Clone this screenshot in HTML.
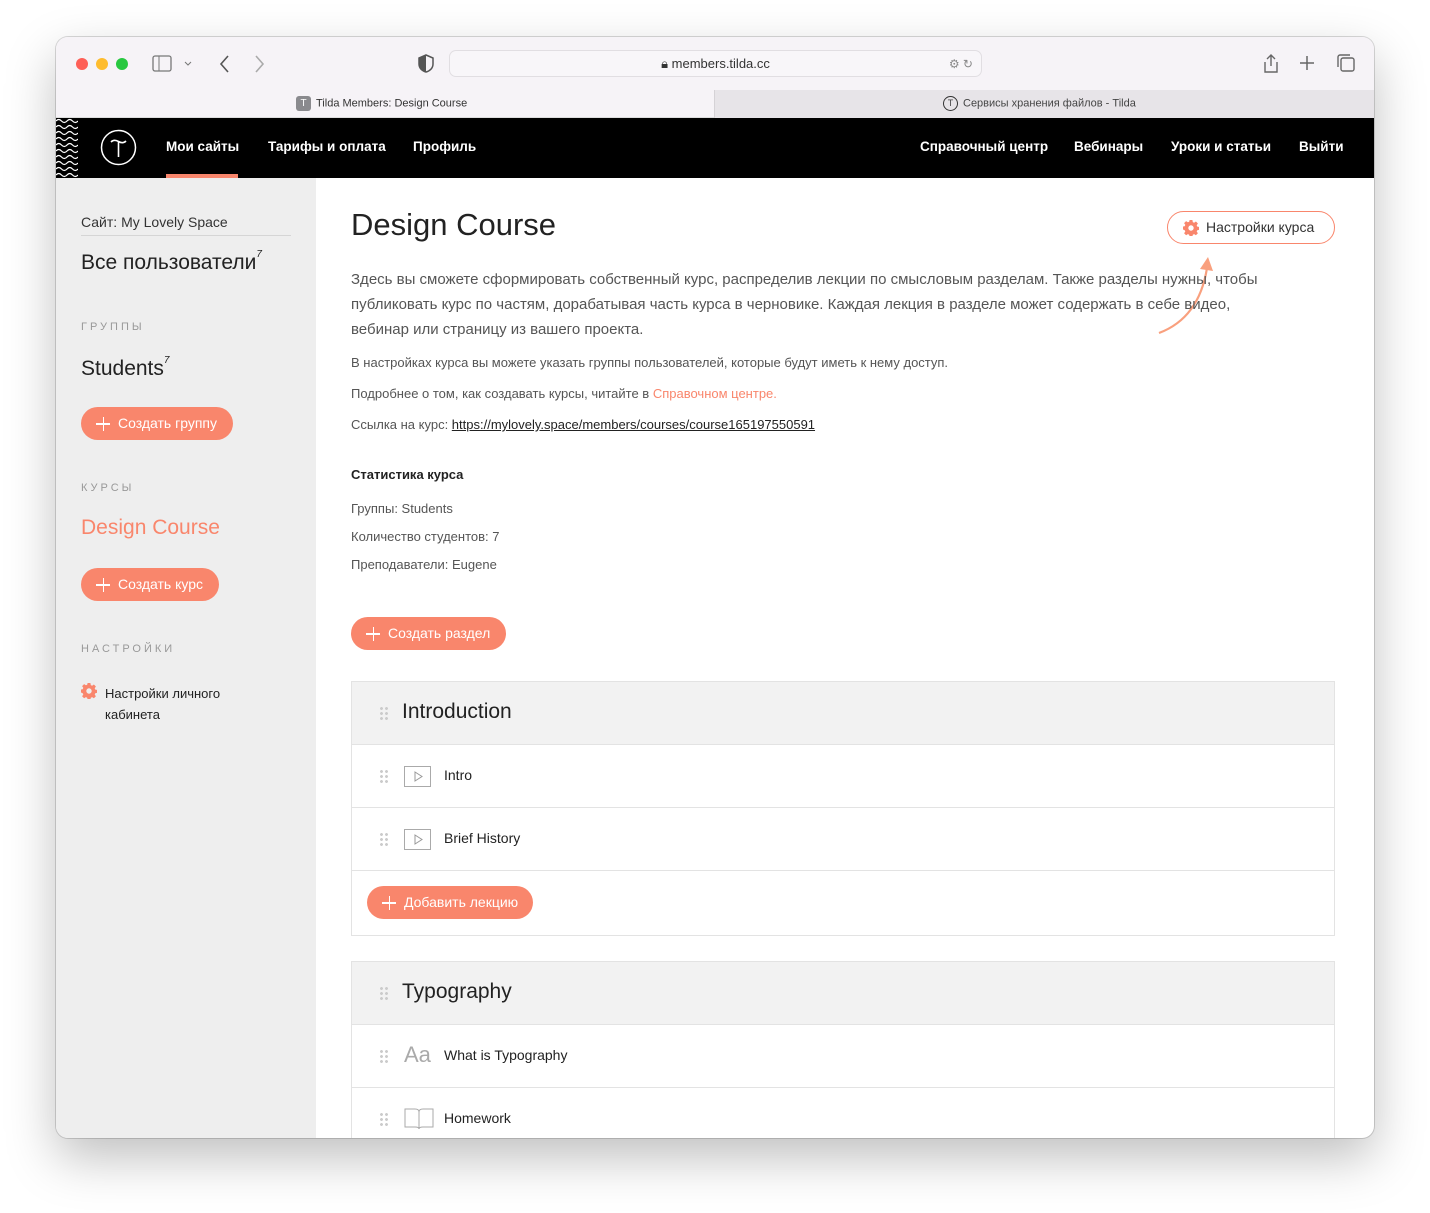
<!DOCTYPE html>
<html><head><meta charset="utf-8"><style>
*{margin:0;padding:0;box-sizing:border-box}
body{width:1430px;height:1213px;background:#fff;font-family:"Liberation Sans",sans-serif;position:relative;overflow:hidden;color:#333}
.win{position:absolute;left:56px;top:37px;width:1318px;height:1101px;border-radius:12px;overflow:hidden;box-shadow:0 20px 50px rgba(0,0,0,.25),0 0 0 1px rgba(0,0,0,.15);background:#fff}
.abs{position:absolute}
.toolbar{left:0;top:0;width:1318px;height:53px;background:#f6f3f7}
.tabs{left:0;top:53px;width:1318px;height:28px;background:#f6f3f7;border-bottom:1px solid #ddd}
.tab2{left:658px;top:53px;width:660px;height:28px;background:#e7e4e8;border-left:1px solid #d5d2d6}
.dot{width:12px;height:12px;border-radius:50%;top:21px}
.url{left:393px;top:13px;width:533px;height:27px;border:1px solid #e1dee2;border-radius:7px;background:#f8f6f9;font-size:13px;color:#333;text-align:center;line-height:26px}
.hdr{left:0;top:81px;width:1318px;height:60px;background:#000;color:#fff;font-size:13.5px;font-weight:bold}
.hdr span{position:absolute;top:21px}
.side{left:0;top:141px;width:260px;height:960px;background:#eeeeee}
.btn{position:absolute;background:#f9866c;color:#fff;border-radius:17px;height:33px;font-size:14px;line-height:33px;padding-left:37px}
.btn:before{content:"";position:absolute;left:15px;top:16px;width:14px;height:1.5px;background:#fff}
.btn:after{content:"";position:absolute;left:21.5px;top:9.5px;width:1.5px;height:14px;background:#fff}
.cap{font-size:11px;letter-spacing:3px;color:#999}
.main{font-size:13px;color:#555}
.sec{left:295px;width:984px;border:1px solid #e3e3e3}
.sh{background:#f2f2f2;height:63px;border-bottom:1px solid #e3e3e3;position:relative}
.row{height:63px;border-bottom:1px solid #e3e3e3;position:relative;background:#fff}
.grip{position:absolute;left:27px;width:10px;height:14px;background:radial-gradient(circle,#ccc 1.3px,transparent 1.6px) 0 0/5px 5px}
.t1{position:absolute;left:50px;font-size:21px;color:#222;top:18px}
.t2{position:absolute;left:92px;font-size:14px;color:#222;top:22px}
</style></head><body>
<svg width="0" height="0" style="position:absolute"><defs><g id="gear"><path fill="#f9866c" fill-rule="evenodd" d="M6.6 0h2.8l.4 2.1 1.3.6 1.8-1.2 2 2-1.2 1.8.6 1.3 2.1.4v2.8l-2.1.4-.6 1.3 1.2 1.8-2 2-1.8-1.2-1.3.6-.4 2.1H6.6l-.4-2.1-1.3-.6-1.8 1.2-2-2 1.2-1.8-.6-1.3L-.4 9.4V6.6l2.1-.4.6-1.3-1.2-1.8 2-2 1.8 1.2 1.3-.6zM8 5.3a2.7 2.7 0 100 5.4 2.7 2.7 0 000-5.4z"/></g></defs></svg>
<div class="win">
<div class="abs toolbar"></div>
<div class="abs dot" style="left:20px;background:#fe5f57"></div>
<div class="abs dot" style="left:40px;background:#febc2e"></div>
<div class="abs dot" style="left:60px;background:#28c840"></div>
<svg class="abs" style="left:96px;top:18px" width="50" height="18"><rect x="1" y="1" width="18" height="15" rx="2" fill="none" stroke="#777" stroke-width="1.3"/><line x1="7" y1="1" x2="7" y2="16" stroke="#777"/><path d="M33 7l3 3 3-3" fill="none" stroke="#777"/></svg>
<svg class="abs" style="left:162px;top:17px" width="50" height="20"><path d="M10 2l-7 8 7 8" fill="none" stroke="#555" stroke-width="1.6"/><path d="M38 2l7 8-7 8" fill="none" stroke="#aaa" stroke-width="1.6"/></svg>
<svg class="abs" style="left:362px;top:17px" width="16" height="19"><path d="M8 1l7 3v6c0 4-3 7-7 8-4-1-7-4-7-8V4z" fill="none" stroke="#555" stroke-width="1.5"/><path d="M8 1v17c-4-1-7-4-7-8V4z" fill="#555"/></svg>
<div class="abs url">🔒︎ members.tilda.cc<span style="position:absolute;right:8px;color:#888;font-size:12px">⚙ ↻</span></div>
<svg class="abs" style="left:1205px;top:15px" width="100" height="22"><path d="M10 3v11M6 7l4-4 4 4M4 10v10h12V10" fill="none" stroke="#666" stroke-width="1.4"/><path d="M46 4v14M39 11h14" stroke="#666" stroke-width="1.5"/><rect x="80" y="6" width="13" height="13" rx="2" fill="none" stroke="#666" stroke-width="1.4"/><path d="M77 15V5a2 2 0 012-2h10" fill="none" stroke="#666" stroke-width="1.4"/></svg>
<div class="abs tabs"></div>
<div class="abs tab2"></div>
<div class="abs" style="left:240px;top:59px;font-size:11px;color:#333"><span style="display:inline-block;width:15px;height:15px;background:#8a8a8e;border-radius:3px;color:#fff;text-align:center;font-size:10px;line-height:15px;vertical-align:middle;margin-right:5px">T</span>Tilda Members: Design Course</div>
<div class="abs" style="left:887px;top:59px;font-size:11px;color:#444"><span style="display:inline-block;width:15px;height:15px;border:1.3px solid #333;border-radius:50%;text-align:center;font-size:9px;line-height:12px;vertical-align:middle;margin-right:5px">T</span>Сервисы хранения файлов - Tilda</div>
<div class="abs hdr">
<svg class="abs" style="left:0;top:0" width="22" height="60"><defs><pattern id="w" width="22" height="6" patternUnits="userSpaceOnUse"><path d="M0 3q2.75-3 5.5 0t5.5 0 5.5 0 5.5 0" fill="none" stroke="#fff" stroke-width="1.2"/></pattern></defs><rect width="22" height="60" fill="url(#w)"/></svg>
<svg class="abs" style="left:44px;top:11px" width="37" height="37"><circle cx="18.5" cy="18.5" r="17" fill="none" stroke="#fff" stroke-width="1.5"/><path d="M11 13q3-3 7.5-.5t7.5-.5M18.5 12.5V28" fill="none" stroke="#fff" stroke-width="1.6"/></svg>
<span style="left:110px">Мои сайты</span><span style="left:212px">Тарифы и оплата</span><span style="left:357px">Профиль</span>
<div class="abs" style="left:110px;top:56px;width:72px;height:4px;background:#f9866c"></div>
<span style="left:864px">Справочный центр</span><span style="left:1018px">Вебинары</span><span style="left:1115px">Уроки и статьи</span><span style="left:1243px">Выйти</span>
</div>
<div class="abs side">
<div class="abs" style="left:25px;top:36px;font-size:14px;color:#333">Сайт: My Lovely Space</div>
<div class="abs" style="left:25px;top:57px;width:210px;height:1px;background:#d5d5d5"></div>
<div class="abs" style="left:25px;top:71px;font-size:21px;color:#222">Все пользователи<sup style="font-size:10px;font-style:italic;vertical-align:12px">7</sup></div>
<div class="abs cap" style="left:25px;top:143px">ГРУППЫ</div>
<div class="abs" style="left:25px;top:177px;font-size:21px;color:#222">Students<sup style="font-size:10px;font-style:italic;vertical-align:12px">7</sup></div>
<div class="btn" style="left:25px;top:229px;width:152px">Создать группу</div>
<div class="abs cap" style="left:25px;top:304px">КУРСЫ</div>
<div class="abs" style="left:25px;top:338px;font-size:21px;color:#f9866c">Design Course</div>
<div class="btn" style="left:25px;top:390px;width:138px">Создать курс</div>
<div class="abs cap" style="left:25px;top:465px">НАСТРОЙКИ</div>
<svg class="abs" style="left:25px;top:505px" width="16" height="16"><use href="#gear"/></svg>
<div class="abs" style="left:49px;top:505px;font-size:13px;color:#222;line-height:21px">Настройки личного<br>кабинета</div>
</div>
<div class="abs" style="left:295px;top:170px;font-size:31px;color:#222">Design Course</div>
<div class="abs" style="left:1111px;top:174px;width:168px;height:33px;border:1.3px solid #f9866c;border-radius:17px;font-size:14px;color:#333;line-height:31px;padding-left:38px"><svg style="position:absolute;left:15px;top:8px" width="16" height="16"><use href="#gear"/></svg>Настройки курса</div>
<svg class="abs" style="left:1095px;top:214px" width="70" height="90"><path d="M8 82q40-15 48-65" fill="none" stroke="#f9a07e" stroke-width="2.2"/><path d="M49 18l8-12 5 14z" fill="#f9a07e"/></svg>
<div class="abs main" style="left:295px;top:230px;width:925px;font-size:15px;line-height:25px;color:#555">Здесь вы сможете сформировать собственный курс, распределив лекции по смысловым разделам. Также разделы нужны, чтобы публиковать курс по частям, дорабатывая часть курса в черновике. Каждая лекция в разделе может содержать в себе видео, вебинар или страницу из вашего проекта.</div>
<div class="abs main" style="left:295px;top:318px">В настройках курса вы можете указать группы пользователей, которые будут иметь к нему доступ.</div>
<div class="abs main" style="left:295px;top:349px">Подробнее о том, как создавать курсы, читайте в <span style="color:#f9866c">Справочном центре.</span></div>
<div class="abs main" style="left:295px;top:380px">Ссылка на курс: <span style="color:#222;text-decoration:underline">https://mylovely.space/members/courses/course165197550591</span></div>
<div class="abs" style="left:295px;top:430px;font-size:13px;font-weight:bold;color:#222">Статистика курса</div>
<div class="abs main" style="left:295px;top:464px">Группы: Students</div>
<div class="abs main" style="left:295px;top:492px">Количество студентов: 7</div>
<div class="abs main" style="left:295px;top:520px">Преподаватели: Eugene</div>
<div class="btn" style="left:295px;top:580px;width:155px">Создать раздел</div>
<div class="abs sec" style="top:644px">
<div class="sh"><div class="grip" style="top:24px"></div><div class="t1">Introduction</div></div>
<div class="row"><div class="grip" style="top:24px"></div><svg class="abs" style="left:52px;top:21px" width="28" height="22"><rect x=".5" y=".5" width="26" height="20" fill="none" stroke="#aaa"/><path d="M11 6l7 4.5-7 4.5z" fill="none" stroke="#999"/></svg><div class="t2">Intro</div></div>
<div class="row"><div class="grip" style="top:24px"></div><svg class="abs" style="left:52px;top:21px" width="28" height="22"><rect x=".5" y=".5" width="26" height="20" fill="none" stroke="#aaa"/><path d="M11 6l7 4.5-7 4.5z" fill="none" stroke="#999"/></svg><div class="t2">Brief History</div></div>
<div style="height:64px;position:relative"><div class="btn" style="left:15px;top:15px;width:166px">Добавить лекцию</div></div>
</div>
<div class="abs sec" style="top:924px;border-bottom:none">
<div class="sh"><div class="grip" style="top:24px"></div><div class="t1">Typography</div></div>
<div class="row"><div class="grip" style="top:24px"></div><div class="abs" style="left:52px;top:17px;font-size:22px;color:#aaa">Aa</div><div class="t2">What is Typography</div></div>
<div class="row"><div class="grip" style="top:24px"></div><svg class="abs" style="left:52px;top:19px" width="30" height="24"><path d="M1 2h10q4 0 4 3v17q0-2-4-2H1zM29 2H19q-4 0-4 3v17q0-2 4-2h10z" fill="none" stroke="#aaa"/></svg><div class="t2">Homework</div></div>
</div>
</div>
</body></html>
